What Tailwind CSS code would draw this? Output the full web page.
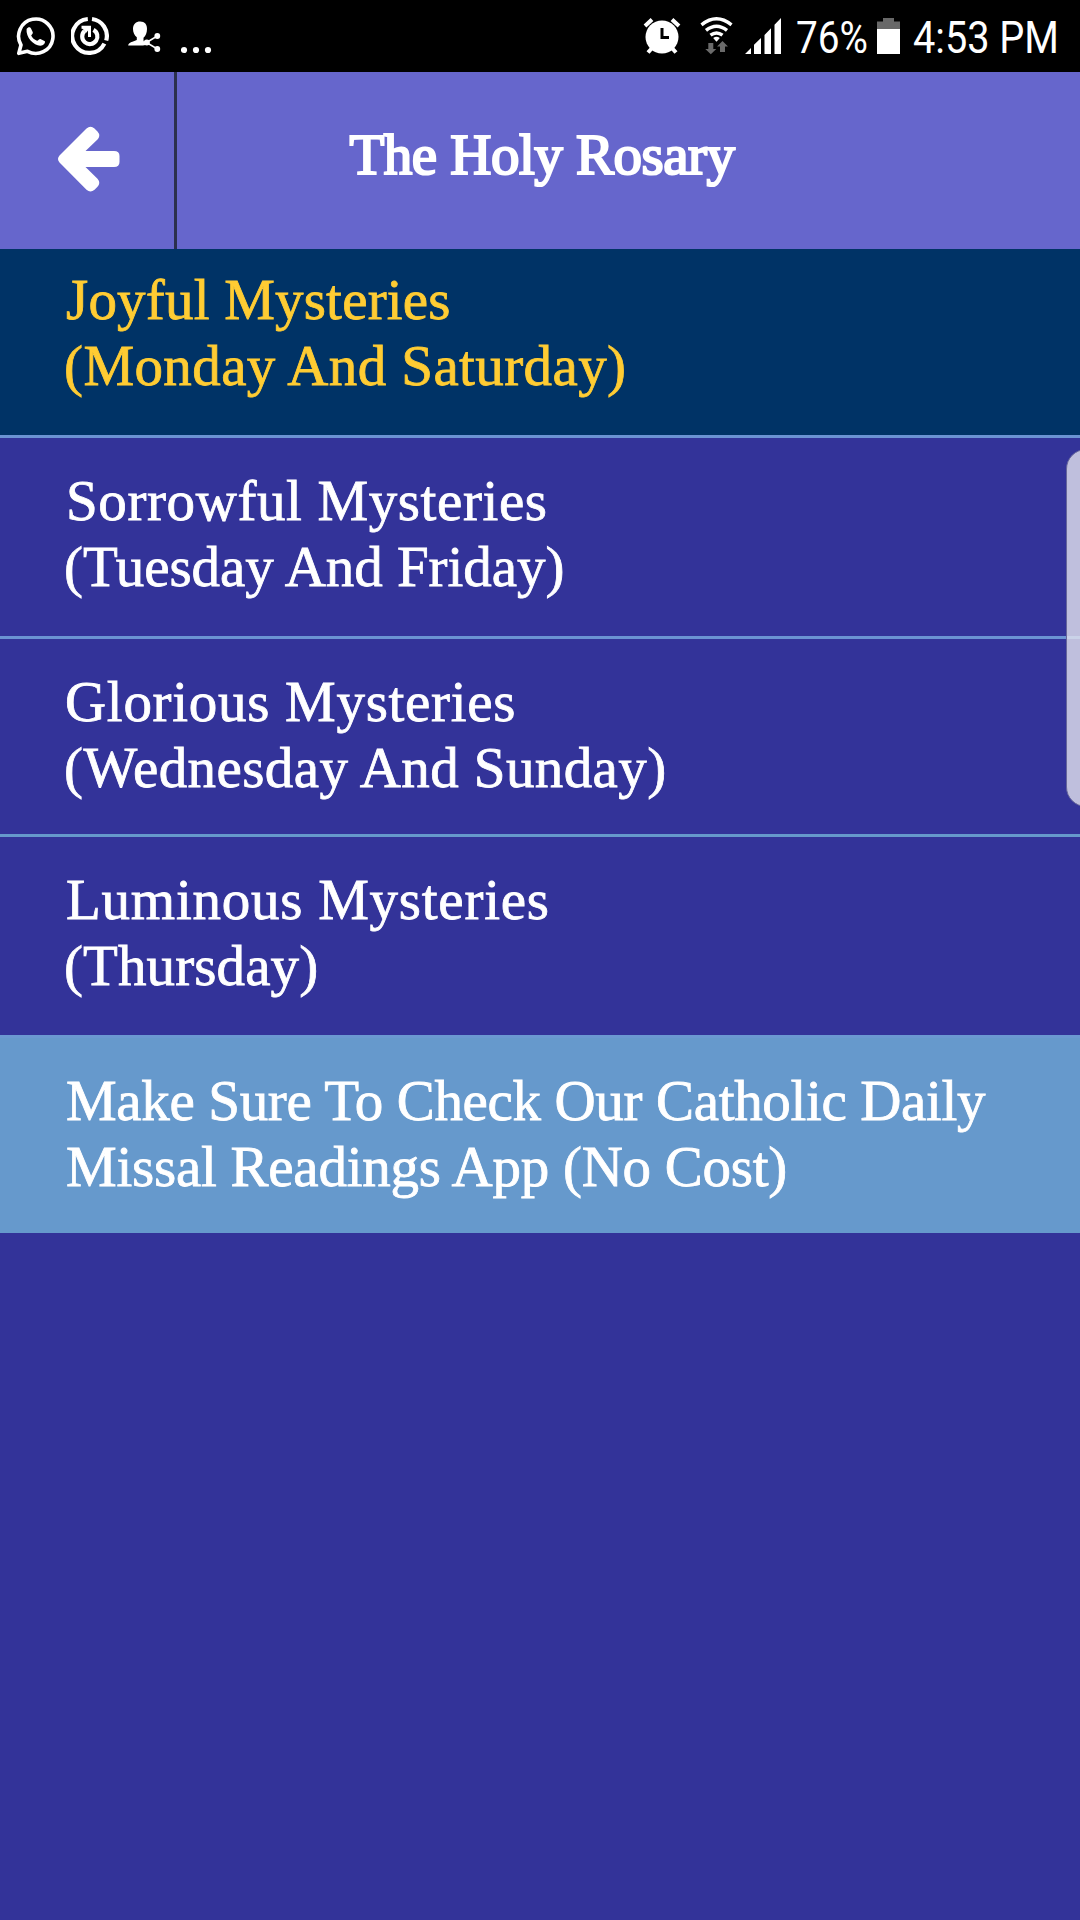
<!DOCTYPE html>
<html lang="en">
<head>
  <meta charset="UTF-8" />
  <meta name="viewport" content="width=device-width, initial-scale=1.0" />
  <title>The Holy Rosary</title>
  <script src="https://cdn.jsdelivr.net/npm/@tailwindcss/browser@4"></script>
</head>
<body class="bg-[#333399] min-h-screen overflow-hidden font-['Liberation_Serif',serif] text-white">

  <!-- Status bar -->
  <div class="flex justify-between h-[72px] bg-black pl-[16px] pr-[16px]">
    <div class="flex">
      <svg class="w-[40px] h-[72px] mr-[15px]" viewBox="16 0 40 72" fill="none">
        <path d="M21 45 A17.2 17.2 0 1 1 27.5 51.3 L18.8 53.3 Z" stroke="#fff" stroke-width="3.6" stroke-linejoin="round" />
        <path d="M26.6 29 C28 26.8 30.2 26.7 31 28.5 L32.8 32.2 C33.3 33.5 31.2 34.8 31.2 35.6 C32.4 38 34.4 39.8 37 40.8 C38.2 41 39.2 38.8 40.4 39.1 L44.4 41.1 C45.8 41.8 44.6 44 43 45 C36.5 48.2 25.4 38.6 26.6 29 Z" fill="#fff" />
      </svg>
      <svg class="w-[38px] h-[72px] mr-[19px]" viewBox="71 0 38 72" fill="none" stroke="#fff">
        <path d="M92 19 A17 17 0 0 1 106.2 40.5 M104.4 43.6 A17 17 0 1 1 87.8 19" stroke-width="4.2" />
        <path d="M93.5 29.8 A7.6 7.6 0 1 1 84.5 31" stroke-width="4.2" />
        <path d="M81.5 27.3 H89.5 V37" stroke-width="3" />
        <path d="M82 28 L86 33 L90 28 Z" fill="#fff" stroke="none" />
      </svg>
      <svg class="w-[33px] h-[72px] mr-5" viewBox="128 0 33 72" fill="#fff">
        <path d="M133 29 C133 24 136 21.5 140.2 21.5 C144.7 21.5 147.2 24.5 147 29 C147 33 145.5 36 143.5 37.8 V40.5 L145.5 45 L143 45.5 H128.2 C128.4 43.5 129.5 42.6 136.8 40 V37.3 C134.5 35.3 133 32.5 133 29 Z" />
        <path d="M157.3 36 L146.5 42.5 L157.3 49" fill="none" stroke="#fff" stroke-width="1.6" />
        <circle cx="157.3" cy="36" r="2.9" />
        <circle cx="146.8" cy="42.5" r="3" />
        <circle cx="157.3" cy="49" r="2.9" />
      </svg>
      <svg class="w-[31px] h-[72px]" viewBox="180 0 31 72" fill="#fff">
        <circle cx="183" cy="50" r="3.1" />
        <circle cx="195" cy="50" r="3.1" />
        <circle cx="207" cy="50" r="3.1" />
      </svg>
    </div>

    <div class="flex">
      <svg class="w-[38px] h-[72px] mr-[18px]" viewBox="643 0 38 72" stroke="#fff">
        <path d="M645 26 L652 19.5 M679 26 L672 19.5" stroke-width="4" />
        <path d="M653 47 L648 52.5 M671 47 L676 52.5" stroke-width="4" />
        <circle cx="662" cy="37" r="16.5" fill="#fff" stroke="none" />
        <path d="M662 28 V37.5 H669" stroke="#000" stroke-width="3" fill="none" />
      </svg>
      <svg class="w-[34px] h-[72px] mr-[11px]" viewBox="699 0 34 72" fill="none" stroke="#fff" stroke-width="3.4">
        <path d="M701.5 24.8 Q716.5 12.8 731.5 24.8" />
        <path d="M706 30.4 Q716.5 22 727 30.4" />
        <path d="M710.5 35.2 Q716.5 30.6 722.5 35.2" />
        <path d="M713.2 38 Q716.5 35.7 719.8 38 L716.5 41.8 Z" fill="#fff" stroke="none" />
        <path d="M708.3 43 H713.3 V49 H716.3 L710.8 54.3 L705.3 49 H708.3 Z M720 52 H725 V46.5 H728 L722.5 41 L717 46.5 H720 Z" fill="#6a6a6a" stroke="none" />
      </svg>
      <svg class="w-[38px] h-[72px] mr-[10px]" viewBox="744 0 38 72" fill="#fff">
        <path d="M745 54 L751 48 V54 Z M754 54 V44.8 L761 38 V54 Z M764.5 54 V35 L771 28.2 V54 Z M774.5 54 V24.8 L781 18 V54 Z" />
      </svg>
      <svg class="w-[81px] h-[72px] mr-[4px] overflow-visible" viewBox="792 0 81 72" fill="#fff">
        <text x="796" y="53" font-family="Roboto, sans-serif" font-size="45" textLength="72" lengthAdjust="spacingAndGlyphs">76%</text>
      </svg>
      <svg class="w-[23px] h-[72px] mr-[9px]" viewBox="877 0 23 72">
        <path d="M877 21.5 H883 V18 H894 V21.5 H900 V29 H877 Z" fill="#686868" />
        <path d="M877 29 H900 V54 H877 Z" fill="#fff" />
      </svg>
      <svg class="w-[155px] h-[72px] overflow-visible" viewBox="909 0 155 72" fill="#fff">
        <text x="913" y="53" font-family="Roboto, sans-serif" font-size="45" textLength="146" lengthAdjust="spacingAndGlyphs">4:53 PM</text>
      </svg>
    </div>
  </div>

  <!-- Header -->
  <header class="flex h-[177px] bg-[#6666cc]">
    <button class="w-[177px] shrink-0 border-r-[3px] border-[#2b304d]">
      <svg class="w-[174px] h-[177px]" viewBox="0 72 174 177" fill="#fff">
        <path d="M59.5 155.5 L86.5 128.5 Q90.5 125 94.5 128.5 L97.5 131.5 Q101 135.5 97.5 139.5 L85.5 151 H114 Q119.5 151 119.5 156 V162 Q119.5 167 114 167 H85.5 L97.5 178.8 Q101 182.8 97.5 186.8 L94.5 189.8 Q90.5 193.3 86.5 189.8 L59.5 162.5 Q56.5 159 59.5 155.5 Z" />
      </svg>
    </button>
    <h1 class="grow pt-[50px] pr-[173px] text-center text-[57px] leading-[66px] whitespace-nowrap tracking-[-0.5px] [-webkit-text-stroke:2.2px]">The Holy Rosary</h1>
  </header>

  <!-- Mysteries -->
  <ul class="text-[57px] leading-[66px] whitespace-nowrap [-webkit-text-stroke:0.8px]">
    <li class="h-[189px] pt-[18px] pl-[64px] bg-[#003366] text-[#ffcc33] border-b-[3px] border-[#6b93d3]">
      <p class="pl-[2px] tracking-[0.2px]">Joyful Mysteries</p>
      <p class="tracking-[0.4px]">(Monday And Saturday)</p>
    </li>
    <li class="h-[201px] pt-[30px] pl-[64px] border-b-[3px] border-[#6b93d3]">
      <p class="pl-[2px] tracking-[0.6px]">Sorrowful Mysteries</p>
      <p class="tracking-[-0.05px]">(Tuesday And Friday)</p>
    </li>
    <li class="h-[198px] pt-[30px] pl-[64px] border-b-[3px] border-[#6699cc]">
      <p class="pl-px tracking-[0.7px]">Glorious Mysteries</p>
      <p class="tracking-[0.4px]">(Wednesday And Sunday)</p>
    </li>
    <li class="h-[198px] pt-[30px] pl-[64px]">
      <p class="pl-[2px] tracking-[0.75px]">Luminous Mysteries</p>
      <p class="tracking-[0.1px]">(Thursday)</p>
    </li>
    <li class="h-[198px] pt-[30px] pl-[66px] bg-[#6699cc] border-t-[3px] border-[#6b98d2]">
      <p class="tracking-[-0.35px]">Make Sure To Check Our Catholic Daily</p>
      <p class="tracking-[-0.25px]">Missal Readings App (No Cost)</p>
    </li>
  </ul>

  <!-- Edge panel handle -->
  <div class="absolute top-[449px] right-[-8px] w-[22px] h-[358px] rounded-l-[20px] border border-[#66669a] bg-[#e2e2ee]/80"></div>
</body>
</html>
